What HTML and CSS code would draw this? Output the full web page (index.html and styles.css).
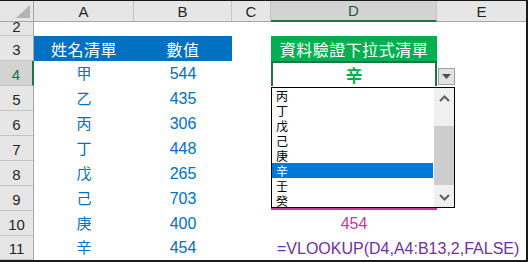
FILE: index.html
```html
<!DOCTYPE html>
<html lang="zh-Hant">
<head>
    <meta charset="UTF-8">
    <title>資料驗證下拉式清單</title>
    <link rel="stylesheet" href="styles.css">
</head>
<body>
    <div class="sheet">
        <!-- column headers -->
        <div class="col-head corner"><span class="corner-mark"></span></div>
        <div class="col-head">A</div>
        <div class="col-head">B</div>
        <div class="col-head">C</div>
        <div class="col-head active">D</div>
        <div class="col-head last">E</div>

        <!-- row 2 -->
        <div class="row-head short">2</div>
        <div class="cell"></div><div class="cell"></div><div class="cell"></div><div class="cell"></div><div class="cell"></div>

        <!-- row 3 -->
        <div class="row-head">3</div>
        <div class="cell title blue">姓名清單</div>
        <div class="cell title blue">數值</div>
        <div class="cell"></div>
        <div class="cell title green">資料驗證下拉式清單</div>
        <div class="cell"></div>

        <!-- row 4 -->
        <div class="row-head active">4</div>
        <div class="cell name">甲</div>
        <div class="cell num">544</div>
        <div class="cell"></div>
        <div class="cell picked">辛</div>
        <div class="cell"></div>

        <div class="row-head">5</div>
        <div class="cell name">乙</div>
        <div class="cell num">435</div>
        <div class="cell"></div><div class="cell"></div><div class="cell"></div>

        <div class="row-head">6</div>
        <div class="cell name">丙</div>
        <div class="cell num">306</div>
        <div class="cell"></div><div class="cell"></div><div class="cell"></div>

        <div class="row-head">7</div>
        <div class="cell name">丁</div>
        <div class="cell num">448</div>
        <div class="cell"></div><div class="cell"></div><div class="cell"></div>

        <div class="row-head">8</div>
        <div class="cell name">戊</div>
        <div class="cell num">265</div>
        <div class="cell"></div><div class="cell"></div><div class="cell"></div>

        <div class="row-head">9</div>
        <div class="cell name">己</div>
        <div class="cell num">703</div>
        <div class="cell"></div>
        <div class="cell pink-line"></div>
        <div class="cell"></div>

        <div class="row-head">10</div>
        <div class="cell name">庚</div>
        <div class="cell num">400</div>
        <div class="cell"></div>
        <div class="cell result">454</div>
        <div class="cell"></div>

        <div class="row-head">11</div>
        <div class="cell name">辛</div>
        <div class="cell num">454</div>
        <div class="cell"></div>
        <div class="cell formula">=VLOOKUP(D4,A4:B13,2,FALSE)</div>
        <div class="cell"></div>

        <!-- validation dropdown -->
        <div class="drop-button">
            <svg width="9" height="5" viewBox="0 0 9 5"><polygon points="0,0 9,0 4.5,5" fill="#505050"/></svg>
        </div>
        <div class="drop-list">
            <ul class="drop-items">
                <li>丙</li>
                <li>丁</li>
                <li>戊</li>
                <li>己</li>
                <li>庚</li>
                <li class="selected">辛</li>
                <li>壬</li>
                <li>癸</li>
            </ul>
            <div class="scrollbar">
                <div class="scroll-btn">
                    <svg width="11" height="7" viewBox="0 0 11 7"><polyline points="1,6 5.5,1.5 10,6" fill="none" stroke="#606060" stroke-width="2"/></svg>
                </div>
                <div class="scroll-track"><div class="scroll-thumb"></div></div>
                <div class="scroll-btn">
                    <svg width="11" height="7" viewBox="0 0 11 7"><polyline points="1,1 5.5,5.5 10,1" fill="none" stroke="#606060" stroke-width="2"/></svg>
                </div>
            </div>
        </div>
    </div>
</body>
</html>
```

FILE: styles.css
```css
html, body {
    margin: 0;
    padding: 0;
    background: #fff;
}

.sheet {
    position: relative;
    display: grid;
    grid-template-columns: 34px 100px 98px 39px 166px 89px;
    grid-template-rows: 21px 14px repeat(8, 25px) 24px;
    width: 526px;
    height: 259px;
    border-top: 1px solid #1a1a1a;
    border-right: 2px solid #1a1a1a;
    border-bottom: 2px solid #1a1a1a;
    overflow: hidden;
    background: #fff;
    font-family: "Liberation Sans", "Noto Sans CJK TC", sans-serif;
}

.col-head {
    display: flex;
    align-items: center;
    justify-content: center;
    box-sizing: border-box;
    background: #e6e6e6;
    border-right: 1px solid #c4c4c4;
    border-bottom: 1px solid #a6a6a6;
    font-size: 15px;
    color: #262626;
}

.col-head.active {
    background: #d3d3d3;
    border-bottom: 2px solid #217346;
    color: #1e5c3a;
}

.col-head.last {
    border-right: none;
}

.col-head.corner {
    align-items: flex-end;
    justify-content: flex-end;
    padding: 0 3px 3px 0;
    border-right: 1px solid #a6a6a6;
}

.corner-mark {
    width: 0;
    height: 0;
    border-left: 14px solid transparent;
    border-bottom: 13px solid #b4b4b4;
}

.row-head {
    display: flex;
    align-items: flex-end;
    justify-content: center;
    box-sizing: border-box;
    padding-bottom: 2px;
    background: #e6e6e6;
    border-right: 1px solid #a6a6a6;
    border-bottom: 1px solid #c4c4c4;
    font-size: 15px;
    line-height: 17px;
    color: #262626;
}

.row-head.short {
    padding-bottom: 0;
}

.row-head.active {
    background: #d3d3d3;
    border-right: 2px solid #217346;
    color: #217346;
}

.cell {
    display: flex;
    align-items: flex-end;
    justify-content: center;
    box-sizing: border-box;
    padding-bottom: 3px;
    font-size: 16px;
    line-height: 18px;
    white-space: nowrap;
}

.cell.title {
    align-items: center;
    padding-bottom: 0;
    color: #fff;
    font-family: "Noto Sans CJK TC", sans-serif;
    font-size: 16px;
    letter-spacing: 0.5px;
}

.cell.blue {
    background: #0070c0;
}

.cell.green {
    background: #00b050;
}

.cell.name {
    color: #0070c0;
    font-family: "Noto Sans CJK TC", sans-serif;
    font-size: 15px;
    padding-bottom: 4px;
}

.cell.num {
    color: #0070c0;
}

.cell.picked {
    align-items: center;
    padding-bottom: 0;
    border: 2px solid #217346;
    border-bottom: none;
    color: #00b050;
    font-family: "Noto Sans CJK TC", sans-serif;
    font-size: 17px;
    font-weight: bold;
}

.cell.pink-line {
    border-bottom: 2px solid #c8379a;
    margin-bottom: 1px;
}

.cell.result {
    color: #c8379a;
}

.cell.formula {
    position: relative;
    z-index: 1;
    justify-content: flex-start;
    padding-left: 6px;
    padding-bottom: 2px;
    overflow: visible;
    color: #7030a0;
    font-size: 16px;
}

/* data validation dropdown */
.drop-button {
    position: absolute;
    left: 438px;
    top: 67px;
    width: 17px;
    height: 17px;
    box-sizing: border-box;
    display: flex;
    align-items: center;
    justify-content: center;
    background: #e1e1e6;
    border: 1px solid #a0a0a8;
}

.drop-list {
    position: absolute;
    z-index: 2;
    left: 271px;
    top: 86px;
    width: 184px;
    height: 121px;
    box-sizing: border-box;
    display: flex;
    background: #fff;
    border: 1px solid #000;
}

.drop-items {
    list-style: none;
    margin: 0;
    padding: 0;
    width: 161px;
    font-family: "Noto Sans CJK TC", sans-serif;
    font-size: 12px;
}

.drop-items li {
    height: 15px;
    line-height: 15px;
    padding-left: 4px;
    overflow: hidden;
    color: #000;
}

.drop-items li.selected {
    background: #0078d7;
    color: #fff;
}

.scrollbar {
    display: flex;
    flex-direction: column;
    width: 20px;
    margin-left: 1px;
    background: #f0f0f0;
}

.scroll-btn {
    display: flex;
    align-items: center;
    justify-content: center;
    height: 20px;
}

.scroll-track {
    flex: 1;
    padding-top: 18px;
}

.scroll-thumb {
    height: 59px;
    background: #cdcdcd;
}
```
